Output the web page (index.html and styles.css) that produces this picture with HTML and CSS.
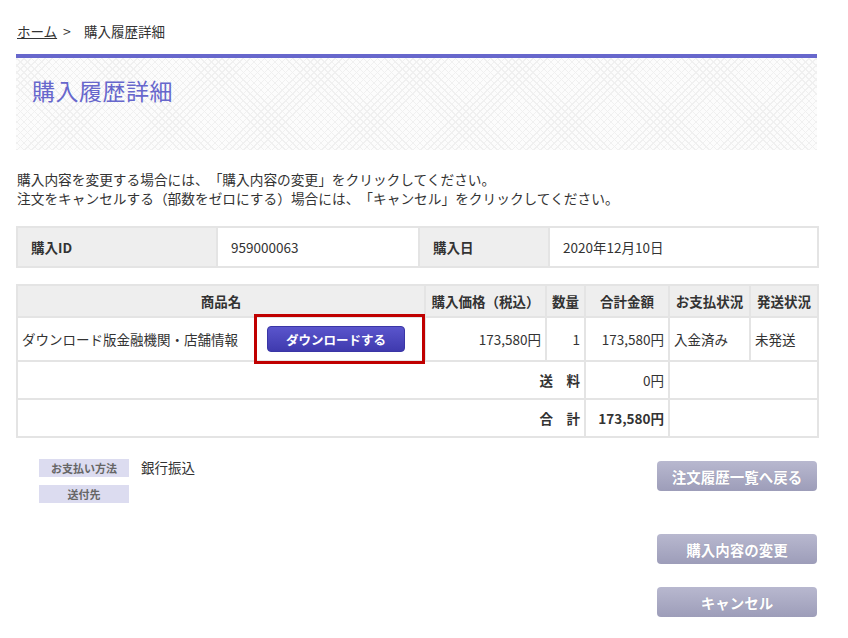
FILE: index.html
```html
<!DOCTYPE html>
<html lang="ja">
<head>
<meta charset="utf-8">
<title>購入履歴詳細</title>
<link rel="stylesheet" href="styles.css">
</head>
<body>
<div class="page">
  <nav class="crumbs"><a href="#" class="crumb-link">ホーム</a><span class="crumb-sep">&gt;</span><span class="crumb-cur">購入履歴詳細</span></nav>

  <div class="title-box">
    <h1 class="title">購入履歴詳細</h1>
  </div>

  <p class="notice">購入内容を変更する場合には、「購入内容の変更」をクリックしてください。<br>注文をキャンセルする（部数をゼロにする）場合には、「キャンセル」をクリックしてください。</p>

  <table class="info">
    <colgroup><col class="c1"><col class="c2"><col class="c3"><col class="c4"></colgroup>
    <tr>
      <th>購入ID</th><td>959000063</td>
      <th>購入日</th><td>2020年12月10日</td>
    </tr>
  </table>

  <table class="items">
    <colgroup><col class="i1"><col class="i2"><col class="i3"><col class="i4"><col class="i5"><col class="i6"></colgroup>
    <tr class="head">
      <th>商品名</th><th>購入価格（税込）</th><th>数量</th><th>合計金額</th><th>お支払状況</th><th>発送状況</th>
    </tr>
    <tr class="row-item">
      <td class="name">
        <div class="name-inner">
          <span>ダウンロード版金融機関・店舗情報</span>
          <button class="dl-btn" type="button">ダウンロードする</button>
        </div>
        <span class="annot"></span>
      </td>
      <td class="num">173,580円</td>
      <td class="num">1</td>
      <td class="num">173,580円</td>
      <td>入金済み</td>
      <td>未発送</td>
    </tr>
    <tr class="row-sum">
      <td colspan="3" class="lbl">送　料</td>
      <td class="num">0円</td>
      <td colspan="2"></td>
    </tr>
    <tr class="row-sum">
      <td colspan="3" class="lbl">合　計</td>
      <td class="num strong">173,580円</td>
      <td colspan="2"></td>
    </tr>
  </table>

  <div class="lower">
    <div class="details">
      <div class="detail-row"><span class="tag">お支払い方法</span><span class="detail-val">銀行振込</span></div>
      <div class="detail-row"><span class="tag">送付先</span></div>
    </div>
    <div class="actions">
      <button class="gray-btn back" type="button">注文履歴一覧へ戻る</button>
      <button class="gray-btn change" type="button">購入内容の変更</button>
      <button class="gray-btn" type="button">キャンセル</button>
    </div>
  </div>
</div>
</body>
</html>
```

FILE: styles.css
```css
* { box-sizing: border-box; }

html, body {
  margin: 0;
  padding: 0;
  background: #ffffff;
}

body {
  font-family: "Noto Sans CJK JP", "Noto Sans", sans-serif;
  color: #333333;
  font-size: 13.5px;
  text-spacing-trim: space-all;
}

.page {
  width: 801px;
  margin-left: 16px;
  padding-top: 21px;
}

/* breadcrumb */
.crumbs {
  display: flex;
  align-items: center;
  font-size: 13.5px;
  line-height: 20px;
  height: 20px;
  padding-left: 1px;
}
.crumb-link {
  color: #333333;
  text-decoration: underline;
}
.crumb-sep {
  margin: 0 13px 0 6px;
  font-size: 14px;
}

/* title */
.title-box {
  margin-top: 13px;
  border-top: 4px solid #6767cc;
  height: 96px;
  background-color: #fcfcfc;
  background-image:
    repeating-linear-gradient(45deg, #f0f0f0 0 1px, transparent 1px 5px),
    repeating-linear-gradient(-45deg, #f0f0f0 0 1px, transparent 1px 5px);
  padding: 15px 0 0 16px;
}
.title {
  margin: 0;
  font-size: 23px;
  font-weight: normal;
  line-height: 34px;
  color: #6767cc;
  letter-spacing: 0.5px;
}

/* notice */
.notice {
  margin: 20px 0 0 1px;
  line-height: 19px;
  font-size: 13.7px;
}

/* info table */
.info {
  margin-top: 18px;
  width: 801px;
  border-collapse: collapse;
  table-layout: fixed;
}
.info .c1 { width: 200px; }
.info .c2 { width: 202px; }
.info .c3 { width: 130px; }
.info .c4 { width: 269px; }
.info th,
.info td {
  height: 40px;
  border: 2px solid #e4e4e4;
  padding: 0 13px;
  text-align: left;
  font-size: 13.5px;
}
.info th {
  background: #eeeeee;
  font-weight: bold;
}

/* items table */
.items {
  margin-top: 16px;
  width: 801px;
  border-collapse: collapse;
  table-layout: fixed;
}
.items .i1 { width: 408px; }
.items .i2 { width: 121px; }
.items .i3 { width: 39px; }
.items .i4 { width: 84px; }
.items .i5 { width: 81px; }
.items .i6 { width: 68px; }
.items th,
.items td {
  border: 2px solid #e4e4e4;
  padding: 0 4px;
  font-size: 13.5px;
  white-space: nowrap;
}
.items th {
  background: #eeeeee;
  font-weight: bold;
  height: 32px;
  text-align: center;
}
.items .row-item td { height: 44px; }
.items .row-sum td { height: 38px; }
.items td.num { text-align: right; }
.items td.lbl {
  text-align: right;
  font-weight: bold;
  padding-right: 4px;
}
.items td.strong { font-weight: bold; }

.items td.name {
  position: relative;
  padding: 0 0 0 4px;
}
.name-inner {
  display: flex;
  align-items: center;
}
.dl-btn {
  margin-left: auto;
  margin-right: 19px;
  width: 138px;
  height: 26px;
  border: 1px solid #3a36a6;
  border-radius: 4px;
  background: linear-gradient(#5a55cc, #3f3aae);
  color: #ffffff;
  font-family: inherit;
  font-weight: bold;
  font-size: 12.5px;
  padding: 0;
  cursor: pointer;
}
.annot {
  position: absolute;
  right: -1px;
  top: -4px;
  width: 171px;
  height: 50px;
  border: 3px solid #c00000;
  pointer-events: none;
}

/* lower section */
.lower {
  display: flex;
  justify-content: space-between;
  margin-top: 21px;
}
.details {
  padding-left: 23px;
  display: flex;
  flex-direction: column;
  gap: 8px;
}
.detail-row {
  display: flex;
  align-items: center;
}
.tag {
  display: inline-block;
  width: 90px;
  height: 18px;
  line-height: 18px;
  background: #dcdcf0;
  color: #666666;
  font-size: 11px;
  font-weight: bold;
  text-align: center;
}
.detail-val {
  margin-left: 12px;
  font-size: 13.5px;
  line-height: 18px;
  position: relative;
  top: -1px;
}

.actions {
  display: flex;
  flex-direction: column;
  padding-top: 2px;
}
.gray-btn {
  width: 160px;
  height: 30px;
  border: none;
  border-radius: 4px;
  background: linear-gradient(#b8b8cf, #9d9db9);
  color: #ffffff;
  font-family: inherit;
  font-weight: bold;
  font-size: 14.5px;
  padding: 0;
  text-shadow: 0 0 1px rgba(0,0,0,0.15);
  cursor: pointer;
}
.gray-btn.back { margin-bottom: 43px; }
.gray-btn.change { margin-bottom: 23px; }
```
